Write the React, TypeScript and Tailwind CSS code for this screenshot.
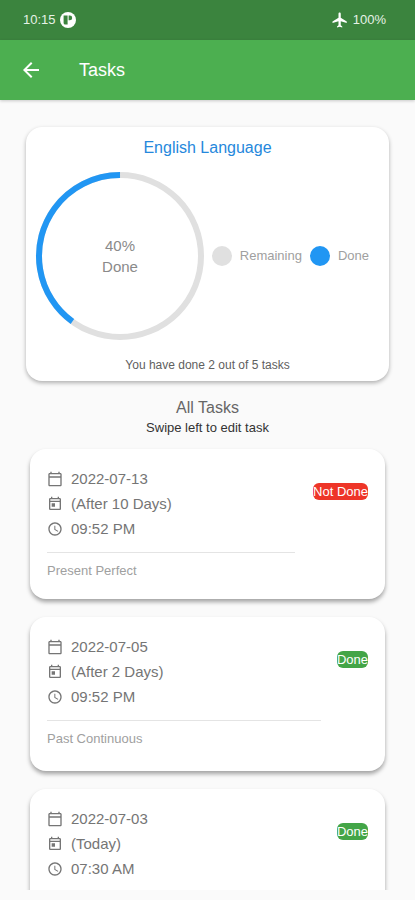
import {
  MdArrowBack,
  MdFlight,
  MdOutlineAccessTime,
  MdOutlineCalendarToday,
  MdOutlineToday,
} from 'react-icons/md'

type Task = {
  date: string
  due: string
  time: string
  title?: string
  done: boolean
}

const tasks: Task[] = [
  { date: '2022-07-13', due: '(After 10 Days)', time: '09:52 PM', title: 'Present Perfect', done: false },
  { date: '2022-07-05', due: '(After 2 Days)', time: '09:52 PM', title: 'Past Continuous', done: true },
  { date: '2022-07-03', due: '(Today)', time: '07:30 AM', done: true },
]

function StatusBar() {
  return (
    <div className="flex h-10 shrink-0 items-center justify-between bg-[#3b843e] pl-[23px] pr-[29px] text-[13px] text-[#e6f2e6]">
      <div className="flex items-center gap-1">
        <span>10:15</span>
        <svg viewBox="0 0 16 16" className="size-4">
          <circle cx="8" cy="8" r="8" fill="#fff" />
          <path d="M3.600 3.500h4v9H5.200a1.600 1.600 0 0 1-1.600-1.600z" fill="#3b843e" />
          <path d="M8.600 3.500h1.200a2.400 2.400 0 0 1 0 4.800H8.600z" fill="#3b843e" />
        </svg>
      </div>
      <div className="flex items-center gap-1">
        <MdFlight className="size-[18px] text-white" />
        <span>100%</span>
      </div>
    </div>
  )
}

function ProgressRing({ percent }: { percent: number }) {
  return (
    <div className="grid size-[170px] shrink-0 place-items-center">
      <svg viewBox="0 0 170 170" className="col-start-1 row-start-1 size-full">
        <circle cx="85" cy="85" r="81" fill="none" stroke="#e0e0e0" strokeWidth="6" />
        <circle
          cx="85"
          cy="85"
          r="81"
          fill="none"
          stroke="#2196f3"
          strokeWidth="6"
          pathLength="100"
          strokeDasharray={`${percent} 100`}
          transform={`rotate(${-90 - percent * 3.6} 85 85)`}
        />
      </svg>
      <p className="col-start-1 row-start-1 text-center text-[15px] leading-[21px] text-[#8a8a8a]">
        {percent}%<br />
        Done
      </p>
    </div>
  )
}

function SummaryCard() {
  return (
    <section className="mx-[26px] mt-[27px] shrink-0 rounded-2xl bg-white pb-[6px] pt-[9px] shadow-[0_2px_4px_rgba(0,0,0,0.3)]">
      <h2 className="text-center text-base leading-6 text-[#2588dc]">English Language</h2>
      <div className="mt-[11px] flex items-center justify-between pl-[9px] pr-5">
        <ProgressRing percent={40} />
        <ul className="flex items-center gap-2 text-[13px] text-[#a0a0a0]">
          <li className="flex items-center gap-2">
            <span className="size-5 rounded-full bg-[#e0e0e0]" />
            Remaining
          </li>
          <li className="flex items-center gap-2">
            <span className="size-5 rounded-full bg-[#2196f3]" />
            Done
          </li>
        </ul>
      </div>
      <p className="mt-3.5 text-center text-xs leading-5 text-[#606060]">You have done 2 out of 5 tasks</p>
    </section>
  )
}

function TaskCard({ task }: { task: Task }) {
  return (
    <li
      className={`flex items-start rounded-2xl bg-white px-[17px] pb-[17px] pt-[18px] shadow-[0_3px_4px_rgba(0,0,0,0.35)] ${
        task.done ? 'min-h-[154px]' : 'min-h-[150px]'
      }`}
    >
      <div className="min-w-0 flex-1">
        <div className="space-y-px text-[15px] leading-6 text-[#757575]">
          <p className="flex items-center gap-2">
            <MdOutlineCalendarToday className="size-4" />
            {task.date}
          </p>
          <p className="flex items-center gap-2">
            <MdOutlineToday className="size-4" />
            {task.due}
          </p>
          <p className="flex items-center gap-2">
            <MdOutlineAccessTime className="size-4" />
            {task.time}
          </p>
        </div>
        {task.title && (
          <>
            <hr className="mt-[11px] border-[#e4e4e4]" />
            <p className="mt-2 text-[13px] leading-5 text-[#a0a0a0]">{task.title}</p>
          </>
        )}
      </div>
      {task.done ? (
        <span className="ml-4 mt-4 rounded-md bg-[#43a547] text-[13px] leading-[17px] text-white">Done</span>
      ) : (
        <span className="ml-[18px] mt-4 rounded-md bg-[#ee3528] text-[13px] leading-[17px] text-white">Not Done</span>
      )}
    </li>
  )
}

export default function App() {
  return (
    <div className="flex h-screen flex-col bg-[#fafafa] pb-[10px] font-['Liberation_Sans',Arial,sans-serif]">
      <StatusBar />
      <header className="flex h-[60px] shrink-0 items-center gap-9 bg-[#4caf50] pl-[19px] text-white shadow-[0_1px_3px_rgba(0,0,0,0.2)]">
        <button type="button" aria-label="Back">
          <MdArrowBack className="size-6" />
        </button>
        <h1 className="text-lg">Tasks</h1>
      </header>

      <SummaryCard />

      <div className="mt-4 shrink-0 text-center">
        <h2 className="text-base leading-[22px] text-[#666]">All Tasks</h2>
        <p className="text-[13px] leading-[18px] text-[#333]">Swipe left to edit task</p>
      </div>

      <ul className="mt-2 min-h-0 flex-1 space-y-[18px] overflow-y-auto px-[30px] pt-1 [scrollbar-width:none]">
        {tasks.map(task => (
          <TaskCard key={task.date} task={task} />
        ))}
      </ul>
    </div>
  )
}
